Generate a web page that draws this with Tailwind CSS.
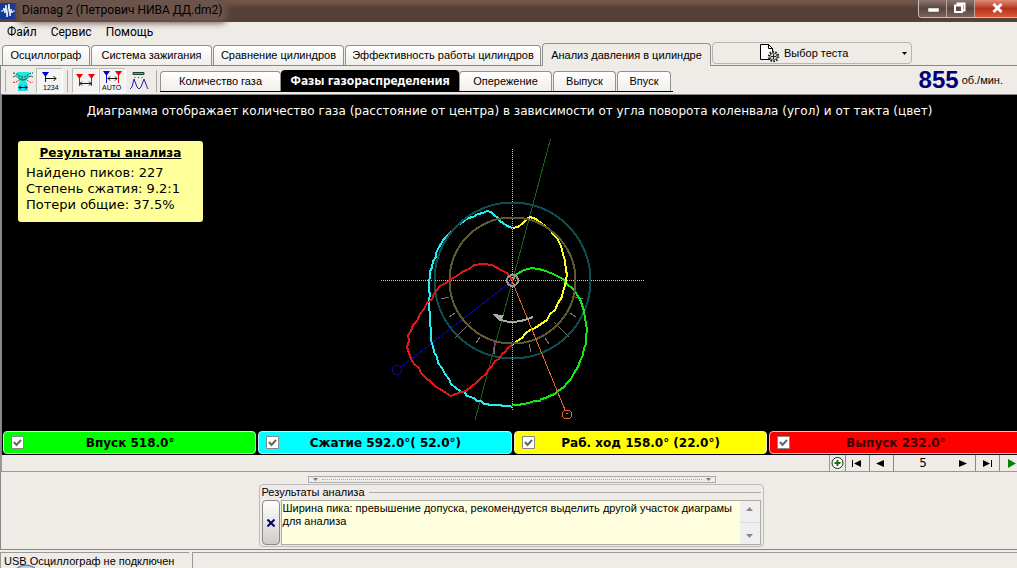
<!DOCTYPE html>
<html lang="ru">
<head>
<meta charset="utf-8">
<title>Diamag 2</title>
<script src="https://cdn.jsdelivr.net/npm/@tailwindcss/browser@4"></script>
</head>
<body class="flex h-screen flex-col overflow-hidden bg-[#efebe7] font-['Liberation_Sans',sans-serif] text-[11px] text-black">

<header class="flex h-[22px] shrink-0 items-start justify-between border-b border-[#5e4239] bg-linear-to-b from-[#755649] from-10% to-[#544037] to-40%">
  <div class="flex items-center gap-1">
    <svg class="h-5 w-4" viewBox="0 0 16 20"><rect y="3" width="16" height="16" fill="#123a9c"/><path d="M1 11h2l1-3 1 5 1-8 1 12 2-13 1 12 1-7 1 4 1-2h2" fill="none" stroke="#fff"/></svg>
    <h1 class="rounded bg-[#6b544b] px-0.5 font-[Roboto,sans-serif] text-xs leading-5 shadow-[0_0_6px_3px_#6b544b]">Diamag 2 (Петрович НИВА ДД.dm2)</h1>
  </div>
  <div class="flex h-[18px] overflow-hidden rounded-bl border-b border-l border-[#cdbdb4]">
    <button aria-label="Свернуть" class="w-7 border-r border-[#b9a79f] bg-linear-to-b from-[#8a7570] via-[#5a443c] to-[#7b645a]"><svg class="h-[17px] w-7" viewBox="0 0 28 17"><rect x="9" y="8" width="11" height="4" fill="#fff" stroke="#555" stroke-width=".5"/></svg></button>
    <button aria-label="Восстановить" class="w-7 border-r border-[#b9a79f] bg-linear-to-b from-[#8a7570] via-[#5a443c] to-[#7b645a]"><svg class="h-[17px] w-7" viewBox="0 0 28 17"><path d="M10.500 5V3.500h7v7H16M8 5.500h7v6.500H8z" fill="none" stroke="#fff" stroke-width="2"/></svg></button>
    <button aria-label="Закрыть" class="w-[42px] bg-linear-to-b from-[#dc8b78] via-[#b8301a] to-[#d9593a]"><svg class="h-[17px] w-[42px]" viewBox="0 0 42 17"><path d="M18.500 4l8 8M26.500 4l-8 8" stroke="#fff" stroke-width="3"/></svg></button>
  </div>
</header>

<nav class="flex h-5 shrink-0 items-center gap-[14px] px-[7px] font-[Roboto,sans-serif] text-xs">
  <button>Файл</button><button>Сервис</button><button>Помощь</button>
</nav>

<div class="flex h-6 shrink-0 items-end">
    <div class="flex h-[21px] flex-1 items-stretch gap-px border-b border-[#888] pl-0.5 whitespace-nowrap">
      <button class="w-[88px] shrink-0 rounded-t-sm border border-b-0 border-[#919191] bg-linear-to-b from-white to-[#f1eeeb]">Осциллограф</button>
      <button class="w-[121px] shrink-0 rounded-t-sm border border-b-0 border-[#919191] bg-linear-to-b from-white to-[#f1eeeb]">Система зажигания</button>
      <button class="w-[131px] shrink-0 rounded-t-sm border border-b-0 border-[#919191] bg-linear-to-b from-white to-[#f1eeeb]">Сравнение цилиндров</button>
      <button class="w-[196px] shrink-0 rounded-t-sm border border-b-0 border-[#919191] bg-linear-to-b from-white to-[#f1eeeb]">Эффективность работы цилиндров</button>
      <button class="-mt-0.5 -mb-px w-[169px] shrink-0 rounded-t-sm border border-b-0 border-[#919191] bg-[#efebe7]">Анализ давления в цилиндре</button>
      <button class="-mt-[3px] mb-px flex w-[200px] items-center rounded border border-[#b9b6b2] pr-1 pl-[46px]">
        <svg class="h-5 w-[21px]" viewBox="0 0 21 20"><path d="M1.500 1.500h8l4 4v11h-12z" fill="#fff" stroke="#000"/><path d="M9.500 1.500v4h4" fill="none" stroke="#000"/><circle cx="14.500" cy="13.500" r="4.500" fill="#d5e0d5" stroke="#222" stroke-width="2.500" stroke-dasharray="1.500 1.300"/><circle cx="14.500" cy="13.500" r="3.500" fill="#d5e0d5" stroke="#555"/><path d="M14.500 11v5M12 13.500h5" stroke="#222"/></svg>
        <span class="ml-1 flex-1 text-left">Выбор теста</span>
        <svg class="h-[3px] w-[5px]" viewBox="0 0 5 3"><path d="M0 0h5L2.500 3z"/></svg>
      </button>
    </div>
</div>

<section class="flex h-7 shrink-0 items-stretch border-l border-[#888] pr-[14px]">
  <div class="flex items-center pl-1 pt-px">
    <i class="mr-1 h-[22px] w-px bg-[#aaa]"></i>
    <button aria-label="Диапазон" class="h-6 w-[26px]"><svg class="h-6 w-[26px]" viewBox="0 0 26 24" fill="none"><path d="M7 3h12v3l-3 6 2 4v6H8v-6l2-4-3-6z" fill="#20e8e0"/><path d="M3 4c4 0 5 4 10 4s5-4 10-4" stroke="#087" stroke-width="1.500" stroke-dasharray="2 1"/><path d="M3 8c4-3 5 3 10 3s5-6 10-3" stroke="#064"/><path d="M3 13c3 2 5-3 10-3s7 5 10 3" stroke="#e11" stroke-dasharray="2 1"/><path d="M9 18.500h8M11 16.500l-2 2 2 2M15 16.500l2 2-2 2" stroke="#007"/></svg></button>
    <button aria-label="Порядок" class="h-[25px] w-[27px] border border-[#bbb] border-r-white border-b-white bg-[#f6f4f2]"><svg class="h-[23px] w-[25px]" viewBox="0 0 25 23"><path d="M5 3h7l-3.500 5z" fill="#00c"/><path d="M8.500 7v6" stroke="#00c"/><path d="M9 9.500h10M16.500 7l2.500 2.500-2.500 2.500" fill="none" stroke="#111"/><text x="6" y="21" font-family="Liberation Sans" font-size="7">1234</text></svg></button>
    <i class="mx-1 h-[22px] w-px bg-[#aaa]"></i>
    <button aria-label="Маркеры" class="h-[25px] w-[27px] border border-[#bbb] border-r-white border-b-white bg-[#f6f4f2]"><svg class="h-[23px] w-[25px]" viewBox="0 0 25 23"><path d="M3 5h7L6.500 10zM15 5h7l-3.500 5z" fill="#e00"/><path d="M6.500 8v9M18.500 8v9" stroke="#e00"/><path d="M7 14.500h11M9 12.500l-2 2 2 2M16 12.500l2 2-2 2" stroke="#111" fill="none"/></svg></button>
    <button aria-label="Авто" class="h-[25px] w-[27px] border border-[#bbb] border-r-white border-b-white bg-[#f6f4f2]"><svg class="h-[23px] w-[25px]" viewBox="0 0 25 23"><path d="M3 2h7L6.500 7z" fill="#00c"/><path d="M15 2h7l-3.500 5z" fill="#e00"/><path d="M6.500 5v9" stroke="#00c"/><path d="M18.500 5v9" stroke="#e00"/><path d="M8 9.500h9M10 7.500l-2 2 2 2M15 7.500l2 2-2 2" stroke="#111" fill="none"/><text x="2" y="21" font-family="Liberation Sans" font-size="7">AUTO</text></svg></button>
    <button aria-label="График" class="h-6 w-[26px]"><svg class="h-6 w-[26px]" viewBox="0 0 26 24"><path d="M7 3.500h11v2H7z" fill="#1c9" stroke="#143"/><path d="M9 8v1M12.500 8v1M16 8v1" stroke="#444"/><path d="M4 20l2-2 2-8 3 8 2 2 2-2 3-8 3 8 1 2" fill="none" stroke="#22a"/></svg></button>
    <i class="ml-1 h-[22px] w-px bg-[#aaa]"></i>
  </div>
  <div class="ml-[3px] flex h-[26px] items-end border-b border-black pr-0.5">
    <button class="h-5 w-[121px] rounded-t-sm border border-b-0 border-[#919191] bg-linear-to-b from-white to-[#f1eeeb]">Количество газа</button>
    <button class="h-[21px] w-[178px] rounded-t-sm bg-black font-['Noto_Sans',sans-serif] text-xs font-bold whitespace-nowrap text-white">Фазы газораспределения</button>
    <button class="mr-px h-5 w-[93px] rounded-t-sm border border-b-0 border-[#919191] bg-linear-to-b from-white to-[#f1eeeb]">Опережение</button>
    <button class="mr-px h-5 w-[63px] rounded-t-sm border border-b-0 border-[#919191] bg-linear-to-b from-white to-[#f1eeeb]">Выпуск</button>
    <button class="h-5 w-[54px] rounded-t-sm border border-b-0 border-[#919191] bg-linear-to-b from-white to-[#f1eeeb]">Впуск</button>
  </div>
  <output class="ml-auto flex items-center gap-[3px]"><b class="text-2xl leading-7 text-[#00007b]">855</b><span>об./мин.</span></output>
</section>

<main class="relative min-h-0 flex-1 border-t border-l-2 border-[#888] bg-black font-['DejaVu_Sans',sans-serif]">
  <h2 class="pt-2 text-center text-xs leading-4 whitespace-nowrap text-white">Диаграмма отображает количество газа (расстояние от центра) в зависимости от угла поворота коленвала (угол) и от такта (цвет)</h2>
  <svg class="absolute inset-0 h-full w-full" viewBox="2 95 1015 336" fill="none" shape-rendering="crispEdges" role="img" aria-label="Фазовая диаграмма">
    <path d="M512.500 149v262M381 280.500h263" stroke="#c8c8c8" stroke-dasharray="1 1"/>
    <path d="M550.500 139L475 420" stroke="#176417"/>
    <path d="M512 281L401 367" stroke="#0808a8"/><circle cx="397" cy="370" r="4.500" stroke="#0808a8"/>
    <path d="M441 299l8-2M449 317l6-4M455 338l16-16M476 343l4-6M495 347l-1 7M575 297l8 2M570 313l6 4M554 322l15 15M545 338l4 6M529 344l2 8" stroke="#777"/>
    <path d="M512.500 228L507 226 503 223 500 221 498 218 494 215 491 212 487 211 483 213 478 214 473 217 468 218 464 221 460 224M453 230L447 236 443 240 441 244 439 247 436 253 436 257 433 261 432 268 430 271 430 277 429 281V291L430 294 429 300V309L430 313V325L431 329 431 341 433 346 434 352 437 357 438 363 442 368 445 374 449 379 451 384 456 388 460 391 465 393 467 396 474 398 477 401 481 401 484 404 493 405 500 405 503 406H510L512 407" stroke="#22eff2" stroke-width="2"/>
    <path d="M460 224L447 236" stroke="#22eff2"/>
    <circle cx="512.500" cy="280.500" r="78" stroke="#0e4e50" stroke-width="2"/>
    <path d="M512 280L517 274 524 270 532 268 538 269 543 270 553 274 563 279 566 283 574 290 577 295 580 299 584 311 585 318 586 324 587 330 586 336 586 344 584 348 583 355 580 361 578 367 574 373 571 379 567 383 564 387 558 391 555 394 549 396 546 398 541 399 540 401 534 401 529 403 523 404 518 405 512 405" stroke="#14e914" stroke-width="2"/>
    <path d="M512.500 228L518 227 523 223 527 219 530 217 536 219 541 223 549 229 553 234 557 238 561 246 563 254 565 261 566 271 567 274 566 281 565 286 563 291 562 297 558 303 555 310 550 314 547 320 541 324 535 328 530 330 525 334 522 338 517 341 512 345" stroke="#ffff18" stroke-width="2"/>
    <circle cx="512.500" cy="280.500" r="63" stroke="#5e5931" stroke-width="2"/>
    <path d="M512 345L508 348 505 352 502 354 499 359 495 361 492 366 488 370 486 374 481 378 476 383 472 386 466 391 458 393 451 396 446 393 440 389 436 387 430 381 427 379 421 373 419 368 414 364 411 359 409 353 407 347 409 341 408 335 411 331 413 325 417 321 420 314 424 309 427 303 432 299 434 294 440 286 446 283 451 279 457 276 462 272 469 269 474 265 483 264 492 265 501 270 507 273 512 280" stroke="#df1717" stroke-width="2"/>
    <path d="M512 281l53 129" stroke="#e8672d"/><circle cx="567" cy="414.500" r="4.500" stroke="#e8672d"/><path d="M566 413h2" stroke="#e8672d"/>
    <path d="M495 341l-2 13" stroke="#80447c"/>
    <path d="M533 317q-19 8-32 3" stroke="#aaa" stroke-width="2"/><path d="M492 314l12 1-4 7z" fill="#aaa"/>
    <circle cx="512.500" cy="280.500" r="5.500" stroke="#9a8f8f" stroke-width="2"/><path d="M511 277l2 4" stroke="#d22" stroke-width="2"/>
  </svg>
  <aside class="absolute top-[46px] left-4 h-[81px] w-[185px] rounded-[3px] bg-[#ffff99] px-2 pt-1 text-[13px] leading-4">
    <h3 class="mb-1 text-center text-xs leading-4 font-bold whitespace-nowrap underline">Результаты анализа</h3>
    <p>Найдено пиков: 227</p><p>Степень сжатия: 9.2:1</p><p>Потери общие: 37.5%</p>
  </aside>
</main>

<div class="shrink-0 overflow-hidden border-l-2 border-[#888] bg-black pb-px font-['DejaVu_Sans',sans-serif] text-xs font-bold">
  <div class="-mr-1.5 grid grid-cols-4">
    <label class="mx-px flex h-[23px] items-center rounded border border-[#c8f0c8] bg-[#00ff00] px-[7px]"><input type="checkbox" checked class="peer sr-only"><svg class="size-[13px] shrink-0" viewBox="0 0 13 13"><path d="M.5.5h12v12H.5z" fill="#fff" stroke="#888"/><path d="M3 6l2.500 3L10 4" fill="none" stroke="#666" stroke-width="2"/></svg><span class="flex-1 pr-3 text-center">Впуск 518.0°</span></label>
    <label class="mx-px flex h-[23px] items-center rounded border border-[#c8f0f0] bg-[#00ffff] px-[7px]"><input type="checkbox" checked class="peer sr-only"><svg class="size-[13px] shrink-0" viewBox="0 0 13 13"><path d="M.5.5h12v12H.5z" fill="#fff" stroke="#888"/><path d="M3 6l2.500 3L10 4" fill="none" stroke="#666" stroke-width="2"/></svg><span class="flex-1 pr-3 text-center">Сжатие 592.0°( 52.0°)</span></label>
    <label class="mx-px flex h-[23px] items-center rounded border border-[#f0f0c8] bg-[#ffff00] px-[7px]"><input type="checkbox" checked class="peer sr-only"><svg class="size-[13px] shrink-0" viewBox="0 0 13 13"><path d="M.5.5h12v12H.5z" fill="#fff" stroke="#888"/><path d="M3 6l2.500 3L10 4" fill="none" stroke="#666" stroke-width="2"/></svg><span class="flex-1 pr-3 text-center">Раб. ход 158.0° (22.0°)</span></label>
    <label class="mx-px flex h-[23px] items-center rounded border border-[#f0b8b8] bg-[#ff0000] px-[7px] text-[#3c0000]"><input type="checkbox" checked class="peer sr-only"><svg class="size-[13px] shrink-0" viewBox="0 0 13 13"><path d="M.5.5h12v12H.5z" fill="#fff" stroke="#888"/><path d="M3 6l2.500 3L10 4" fill="none" stroke="#666" stroke-width="2"/></svg><span class="flex-1 pr-3 text-center">Выпуск 232.0°</span></label>
  </div>
</div>

<div class="flex h-[17px] shrink-0 justify-end border-b border-l-2 border-[#999]">
  <button aria-label="Добавить" class="w-[17px] border-r border-l border-r-[#888] border-l-[#d98a3a]"><svg class="h-4 w-[15px]" viewBox="0 0 15 16"><circle cx="7.500" cy="8" r="5.500" fill="#fff" stroke="#222"/><path d="M7.500 5v6M4.500 8h6" stroke="#0a7a0a" stroke-width="2"/></svg></button>
  <button aria-label="В начало" class="w-6 border-r border-[#888]"><svg class="h-4 w-[23px]" viewBox="0 0 23 16"><path d="M6 5h1v7H6zM15 5v7L8 8.500z"/></svg></button>
  <button aria-label="Назад" class="w-6 border-r border-[#888]"><svg class="h-4 w-[23px]" viewBox="0 0 23 16"><path d="M14 5v7L6 8.500z"/></svg></button>
  <output class="w-[58px] text-center font-['DejaVu_Sans',sans-serif] text-xs leading-4">5</output>
  <button aria-label="Вперёд" class="w-6 border-r border-[#888]"><svg class="h-4 w-[23px]" viewBox="0 0 23 16"><path d="M7 5v7l8-3.500z"/></svg></button>
  <button aria-label="В конец" class="w-6 border-r border-[#888]"><svg class="h-4 w-[23px]" viewBox="0 0 23 16"><path d="M7 5v7l7-3.500zM15 5h1v7h-1z"/></svg></button>
  <button aria-label="Пуск" class="w-[17px]"><svg class="h-4 w-[17px]" viewBox="0 0 17 16"><path d="M8 4v9l8-4.500z" fill="#0a7f0a"/></svg></button>
</div>

<section class="flex h-[78px] shrink-0 flex-col items-center border-b border-l border-[#888] pt-1">
  <div class="ml-1.5 flex h-[7px] w-[408px] items-center gap-1 border border-[#aaa] px-1">
    <svg class="h-[3px] w-[5px]" viewBox="0 0 5 3"><path d="M0 0h5L2.500 3z" fill="#777"/></svg><i class="flex-1 border-t border-dotted border-[#aaa]"></i><svg class="h-[3px] w-[5px]" viewBox="0 0 5 3"><path d="M0 0h5L2.500 3z" fill="#777"/></svg>
  </div>
  <div class="mt-px ml-1 w-[505px] rounded border border-[#bbb] px-0.5 pb-px">
    <div class="flex h-[15px] items-center gap-1 leading-[15px]"><label for="result">Результаты анализа</label><i class="h-px flex-1 bg-[#aaa]"></i></div>
    <div class="flex h-[45px] gap-px">
      <button aria-label="Очистить" class="w-[18px] rounded-sm border border-[#888] bg-linear-to-b from-white to-[#cfcccb]"><svg class="mx-auto size-2" viewBox="0 0 8 8"><path d="M.5.5l7 7M7.500.5l-7 7" stroke="#00006b" stroke-width="2"/></svg></button>
      <div class="flex flex-1 border border-[#aaa]">
        <textarea id="result" readonly class="flex-1 resize-none overflow-hidden bg-[#ffffdf] pt-px pl-px leading-[13px]">Ширина пика: превышение допуска, рекомендуется выделить другой участок диаграмы для анализа</textarea>
        <div class="flex w-5 flex-col items-center justify-around bg-[#f0eff0]"><svg class="h-1 w-[7px]" viewBox="0 0 7 4"><path d="M0 4h7L3.500 0z" fill="#888"/></svg><i class="h-px w-full bg-[#ddd]"></i><svg class="h-1 w-[7px]" viewBox="0 0 7 4"><path d="M0 0h7L3.500 4z" fill="#888"/></svg></div>
      </div>
    </div>
  </div>
</section>

<footer class="relative mt-0.5 flex h-4 shrink-0 gap-[3px] overflow-hidden leading-4">
  <span class="w-[189px] border-t border-l border-[#999] pl-[3px] whitespace-nowrap">USB Осциллограф не подключен</span>
  <span class="flex-1 border-t border-l border-[#999]"></span>
  <svg class="absolute bottom-0 left-4 h-1 w-5" viewBox="0 0 20 4"><path d="M1 4q9-6 18 0" fill="#b8cfe8" stroke="#36639c"/></svg>
</footer>
</body>
</html>
